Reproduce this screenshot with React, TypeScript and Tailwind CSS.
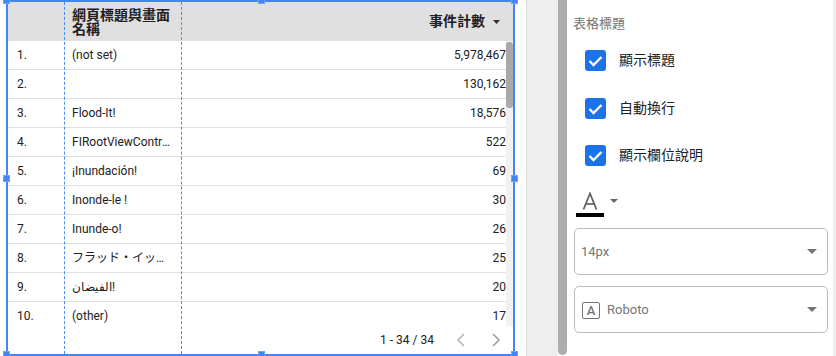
import React from "react";

const rows: [string, string, string][] = [
  ["1.", "(not set)", "5,978,467"],
  ["2.", "", "130,162"],
  ["3.", "Flood-It!", "18,576"],
  ["4.", "FIRootViewController", "522"],
  ["5.", "¡Inundación!", "69"],
  ["6.", "Inonde-le !", "30"],
  ["7.", "Inunde-o!", "26"],
  ["8.", "フラッド・イット！", "25"],
  ["9.", "الفيضان!", "20"],
  ["10.", "(other)", "17"],
];

function Handle({ cls }: { cls: string }) {
  return <div className={"absolute w-[7px] h-[7px] bg-[#4285f4] border border-[#6fa1f6] " + cls} />;
}

function Check({ label, cls }: { label: string; cls: string }) {
  return (
    <div className={"flex items-center h-[20px] ml-[18px] gap-[13px] " + cls}>
      <div className="w-[21px] h-[21px] rounded-[3px] bg-[#1a73e8] flex items-center justify-center">
        <svg width="21" height="21" viewBox="0 0 21 21">
          <polyline points="4.5,11 8.5,15 16.5,7" fill="none" stroke="#ffffff" strokeWidth="2.3" />
        </svg>
      </div>
      <span className="text-[14px] leading-[20px] text-[#202124]">{label}</span>
    </div>
  );
}

function Tri({ w, h, color }: { w: number; h: number; color: string }) {
  return (
    <svg width={w} height={h} viewBox={`0 0 ${w} ${h}`}>
      <polygon points={`0,0 ${w},0 ${w / 2},${h}`} fill={color} />
    </svg>
  );
}

export default function App() {
  return (
    <div className="flex w-[836px] h-[356px] bg-white overflow-hidden [font-family:Roboto,'Noto_Sans_CJK_TC',sans-serif]">
      {/* left: table widget */}
      <div className="w-[526px] shrink-0">
        <div className="relative ml-[6px] w-[509px] h-[356px] border-2 border-[#4285f4] flex flex-col">
          {/* header */}
          <div className="flex h-[39px] shrink-0 bg-[#e0e0e0] text-[#202124] font-bold">
            <div className="w-[56px] shrink-0" />
            <div className="w-[117px] shrink-0 px-2 flex items-center text-[14px] leading-[14px]">
              網頁標題與畫面名稱
            </div>
            <div className="flex-1 flex items-center justify-end pr-[13px] text-[14px]">
              <span>事件計數</span>
              <span className="ml-[8px] flex items-center">
                <Tri w={7} h={4} color="#333333" />
              </span>
            </div>
          </div>
          {/* body */}
          <div className="flex h-[285px] shrink-0">
            <div className="flex-1 overflow-hidden text-[12px] text-[#212121]">
              {rows.map((r) => (
                <div key={r[0]} className="flex h-[29px] shrink-0 border-b border-[#e0e0e0] items-center">
                  <div className="w-[56px] shrink-0 pl-[9px]">{r[0]}</div>
                  <div className="w-[117px] shrink-0 pl-2 pr-2 truncate">{r[1]}</div>
                  <div className="flex-1 text-right">{r[2]}</div>
                </div>
              ))}
            </div>
            <div className="w-[7px] shrink-0 bg-[#f1f1f1]">
              <div className="mt-[1px] h-[66px] rounded-[3px] bg-[#a9a9a9]" />
            </div>
          </div>
          {/* footer */}
          <div className="flex-1 flex items-center justify-end text-[12px] text-[#212121] pr-[5px]">
            <span>1 - 34 / 34</span>
            <svg className="ml-[15px]" width="24" height="24" viewBox="0 0 24 24">
              <polyline points="15,6 9,12 15,18" fill="none" stroke="#b5b5b5" strokeWidth="1.6" />
            </svg>
            <svg className="ml-[11px]" width="24" height="24" viewBox="0 0 24 24">
              <polyline points="9,6 15,12 9,18" fill="none" stroke="#a0a0a0" strokeWidth="1.6" />
            </svg>
          </div>
          {/* selection overlays */}
          <div className="absolute left-[56px] top-0 bottom-0 border-l border-dashed border-[#4a8af4]" />
          <div className="absolute left-[173px] top-0 bottom-0 border-l border-dashed border-[#4a8af4]" />
          <Handle cls="left-[-5px] top-[-5px]" />
          <Handle cls="left-[250px] top-[-5px]" />
          <Handle cls="left-[503px] top-[-5px]" />
          <Handle cls="left-[-5px] top-[173px]" />
          <Handle cls="left-[503px] top-[173px]" />
          <Handle cls="left-[-5px] top-[349px]" />
          <Handle cls="left-[250px] top-[349px]" />
          <Handle cls="left-[503px] top-[349px]" />
        </div>
      </div>

      {/* canvas gutter */}
      <div className="w-[32px] shrink-0 bg-[#eeeeee] border-l border-[#dcdcdc]" />
      <div className="w-[9px] shrink-0 h-[355px] bg-[#adadad] rounded-b-[5px]" />

      {/* right panel */}
      <div className="w-[266px] shrink-0 flex flex-col">
        <div className="mt-[16px] ml-[6px] h-[16px] leading-[16px] text-[13px] text-[#757575]">表格標題</div>
        <Check label="顯示標題" cls="mt-[18px]" />
        <Check label="自動換行" cls="mt-[28px]" />
        <Check label="顯示欄位說明" cls="mt-[27px]" />

        <div className="mt-[27px] ml-[9px] h-[26px] flex items-start">
          <svg width="28" height="26" viewBox="0 0 28 26">
            <polyline points="7.5,17.5 14,1.5 20.5,17.5" fill="none" stroke="#5f6368" strokeWidth="1.8" />
            <line x1="9.8" y1="12" x2="18.2" y2="12" stroke="#5f6368" strokeWidth="1.7" />
            <rect x="0" y="21" width="28" height="4" fill="#000000" />
          </svg>
          <span className="ml-[6px] mt-[7px] flex">
            <Tri w={8} h={4} color="#666666" />
          </span>
        </div>

        <div className="mt-[10px] ml-[7px] w-[254px] h-[47px] border border-[#bdbdbd] rounded-[5px] flex items-center justify-between pl-[6px] pr-[10px]">
          <span className="text-[13px] text-[#757575]">14px</span>
          <Tri w={10} h={5} color="#757575" />
        </div>

        <div className="mt-[11px] ml-[7px] w-[254px] h-[47px] border border-[#bdbdbd] rounded-[5px] flex items-center justify-between pl-[7px] pr-[10px]">
          <div className="flex items-center">
            <div className="mt-[2px] w-[18px] h-[17px] border-[1.5px] border-[#757575] rounded-[2px] flex items-center justify-center text-[13px] leading-none font-medium text-[#757575]">
              A
            </div>
            <span className="ml-[7px] text-[13px] text-[#757575]">Roboto</span>
          </div>
          <Tri w={10} h={5} color="#757575" />
        </div>
      </div>

      <div className="flex-1 bg-[#eeeeee]" />
    </div>
  );
}
